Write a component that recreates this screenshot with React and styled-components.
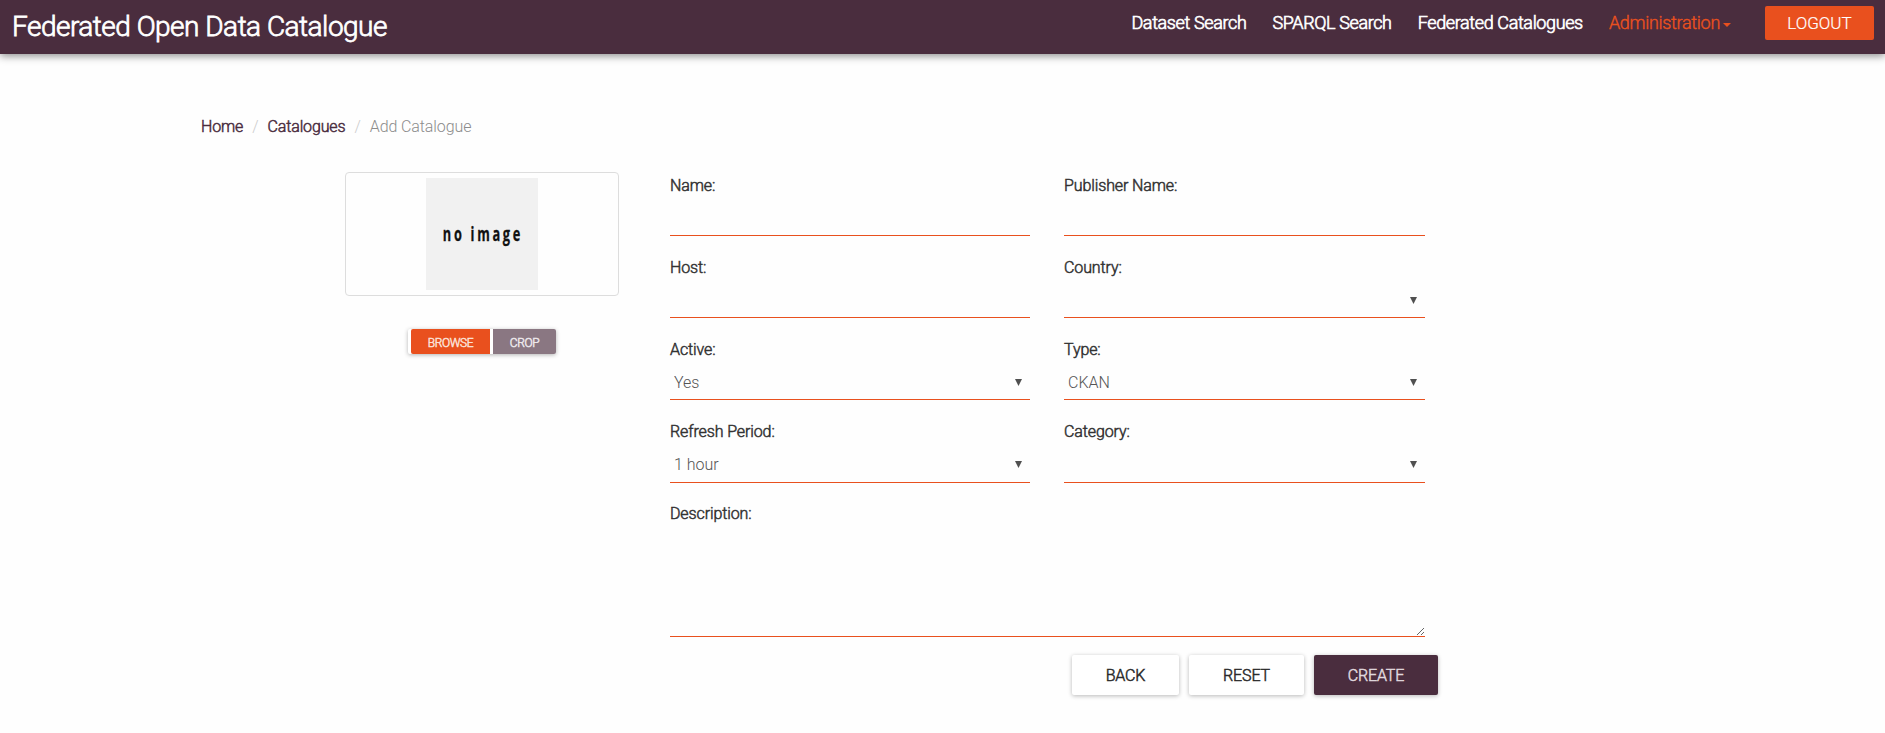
import React from "react";
import styled, { createGlobalStyle, css } from "styled-components";

const plum = "#4a2d3e";
const orange = "#e9501e";

const GlobalStyle = createGlobalStyle`
  *, *::before, *::after { box-sizing: border-box; }
  body {
    margin: 0;
    background: #fefefe;
    color: #333;
    font-family: Roboto, "Liberation Sans", sans-serif;
    font-weight: 300;
    font-size: 16px;
  }
`;

const heavy = css`
  -webkit-text-stroke: ${(p) => p.$stroke || 0.5}px currentColor;
`;

const Page = styled.div`
  min-height: 100vh;
`;

const Header = styled.header`
  display: flex;
  align-items: flex-start;
  height: 54px;
  padding-right: 11px;
  background: ${plum};
  color: #fff;
  box-shadow: 0 2px 8px rgba(0, 0, 0, 0.45);
`;

const Brand = styled.a`
  margin: 0 auto 0 12px;
  font-size: 28px;
  line-height: 54px;
  letter-spacing: -0.51px;
  white-space: nowrap;
  ${heavy}
`;

const Nav = styled.nav`
  display: flex;
  gap: 26px;
  margin-right: 34px;
`;

const NavLink = styled.a`
  display: flex;
  align-items: center;
  font-size: 18px;
  line-height: 46px;
  letter-spacing: ${(p) => (p.$active ? -0.3 : -0.37)}px;
  white-space: nowrap;
  color: ${(p) => (p.$active ? orange : "#fff")};
  ${heavy}
`;

const Caret = styled.i`
  margin: 3px 0 0 3px;
  border: 4px solid transparent;
  border-top-color: currentColor;
  border-bottom: 0;
`;

const Logout = styled.button`
  width: 109px;
  height: 34px;
  margin-top: 6px;
  padding: 0;
  border: 0;
  border-radius: 2px;
  background: ${orange};
  color: #fff;
  font: 300 17px/34px Roboto, sans-serif;
  -webkit-text-stroke: 0.2px currentColor;
`;

const Breadcrumb = styled.ol`
  display: flex;
  margin: 60px 0 0 201px;
  padding: 0;
  list-style: none;
  line-height: 25px;
`;

const Crumb = styled.li`
  color: ${(p) => (p.$current ? "#8c8c8c" : plum)};
  letter-spacing: ${(p) => (p.$current ? -0.1 : -0.13)}px;
  -webkit-text-stroke: ${(p) => (p.$current ? 0 : 0.5)}px currentColor;

  &:not(:first-child)::before {
    content: "/";
    padding: 0 9px;
    color: #ccc;
    -webkit-text-stroke: 0;
  }
`;

const Content = styled.main`
  display: flex;
  align-items: flex-start;
  gap: 51px;
  margin: 33px 0 0 345px;
`;

const LogoPanel = styled.section`
  display: flex;
  flex-direction: column;
  align-items: center;
  width: 274px;
`;

const Thumbnail = styled.div`
  display: flex;
  justify-content: center;
  width: 100%;
  height: 124px;
  padding: 5px;
  border: 1px solid #ddd;
  border-radius: 4px;
`;

const Placeholder = styled.div`
  display: flex;
  align-items: center;
  justify-content: center;
  width: 112px;
  height: 112px;
  background: #f1f1f1;
  color: #111;
`;

const PlaceholderText = styled.span`
  flex: none;
  padding-left: 4px;
  font: 700 20px/24px "Open Sans", sans-serif;
  letter-spacing: 4.2px;
  transform: scaleX(0.64);
  -webkit-text-stroke: 0.3px currentColor;
  white-space: nowrap;
`;

const ButtonGroup = styled.div`
  display: flex;
  gap: 3px;
  margin-top: 33px;
  padding-left: 3px;
  border-radius: 2px;
  background: #fff;
  box-shadow: 0 1px 4px rgba(0, 0, 0, 0.3);
`;

const SmallButton = styled.button`
  width: ${(p) => p.$width}px;
  height: 25px;
  padding: 2px 0 0;
  border: 0;
  border-radius: ${(p) => (p.$muted ? "0 2px 2px 0" : "2px 0 0 2px")};
  background: ${(p) => (p.$muted ? "#8a7782" : orange)};
  color: ${(p) => (p.$muted ? "#ece8eb" : "#fbe0d7")};
  font: 300 12px Roboto, sans-serif;
  letter-spacing: -0.4px;
  -webkit-text-stroke: 0.5px currentColor;
`;

const Form = styled.form`
  width: 768px;
`;

const Grid = styled.div`
  display: grid;
  grid-template-columns: 360px 361px;
  grid-template-rows: 82px 82px 82px 82px;
  column-gap: 34px;
`;

const Field = styled.label`
  display: block;
  width: ${(p) => (p.$wide ? "755px" : "auto")};
`;

const Label = styled.span`
  display: block;
  line-height: 28px;
  letter-spacing: -0.11px;
  ${heavy}
`;

const control = css`
  display: block;
  width: 100%;
  margin: 0;
  border: 0;
  border-bottom: 1px solid ${orange};
  border-radius: 0;
  outline: 0;
  background: transparent;
  color: #555;
  font: 300 16px Roboto, sans-serif;
`;

const Input = styled.input`
  ${control}
  height: 36px;
`;

const SelectWrap = styled.span`
  display: block;
  position: relative;

  &::after {
    content: "";
    position: absolute;
    top: 15px;
    right: 8px;
    width: 7px;
    height: 7px;
    background: #505050;
    clip-path: polygon(0 0, 100% 0, 50% 100%);
  }
`;

const Select = styled.select`
  ${control}
  height: ${(p) => p.$height}px;
  padding: 1px 4px 0;
  appearance: none;
`;

const TextArea = styled.textarea`
  ${control}
  height: 109px;
  resize: vertical;
`;

const Actions = styled.div`
  display: flex;
  justify-content: flex-end;
  gap: 10px;
  margin-top: 18px;
`;

const ActionButton = styled.button`
  width: ${(p) => p.$width}px;
  height: 40px;
  padding: 0;
  border: 0;
  border-radius: 2px;
  background: ${(p) => (p.$primary ? plum : "#fff")};
  color: ${(p) => (p.$primary ? "#e0d9de" : "#2b2b2b")};
  box-shadow: 0 1px 4px rgba(0, 0, 0, 0.28);
  font: 300 16px Roboto, sans-serif;
  letter-spacing: -0.15px;
  ${heavy}
`;

function SelectField({ label, value, height = 36 }) {
  return (
    <Field>
      <Label>{label}</Label>
      <SelectWrap>
        <Select $height={height} defaultValue={value}>
          <option>{value}</option>
        </Select>
      </SelectWrap>
    </Field>
  );
}

function InputField({ label }) {
  return (
    <Field>
      <Label>{label}</Label>
      <Input type="text" />
    </Field>
  );
}

export default function App() {
  return (
    <Page>
      <GlobalStyle />
      <Header>
        <Brand $stroke={0.8}>Federated Open Data Catalogue</Brand>
        <Nav>
          <NavLink $stroke={0.65}>Dataset Search</NavLink>
          <NavLink $stroke={0.65}>SPARQL Search</NavLink>
          <NavLink $stroke={0.65}>Federated Catalogues</NavLink>
          <NavLink $active $stroke={0.4}>
            Administration
            <Caret />
          </NavLink>
        </Nav>
        <Logout>LOGOUT</Logout>
      </Header>
      <Breadcrumb>
        <Crumb>Home</Crumb>
        <Crumb>Catalogues</Crumb>
        <Crumb $current>Add Catalogue</Crumb>
      </Breadcrumb>
      <Content>
        <LogoPanel>
          <Thumbnail>
            <Placeholder>
              <PlaceholderText>no image</PlaceholderText>
            </Placeholder>
          </Thumbnail>
          <ButtonGroup>
            <SmallButton $width={79}>BROWSE</SmallButton>
            <SmallButton $width={63} $muted>
              CROP
            </SmallButton>
          </ButtonGroup>
        </LogoPanel>
        <Form>
          <Grid>
            <InputField label="Name:" />
            <InputField label="Publisher Name:" />
            <InputField label="Host:" />
            <SelectField label="Country:" value="" />
            <SelectField label="Active:" value="Yes" />
            <SelectField label="Type:" value="CKAN" />
            <SelectField label="Refresh Period:" value="1 hour" height={37} />
            <SelectField label="Category:" value="" height={37} />
          </Grid>
          <Field $wide>
            <Label>Description:</Label>
            <TextArea />
          </Field>
          <Actions>
            <ActionButton type="button" $width={107}>BACK</ActionButton>
            <ActionButton type="button" $width={115}>RESET</ActionButton>
            <ActionButton type="button" $width={124} $primary>CREATE</ActionButton>
          </Actions>
        </Form>
      </Content>
    </Page>
  );
}
